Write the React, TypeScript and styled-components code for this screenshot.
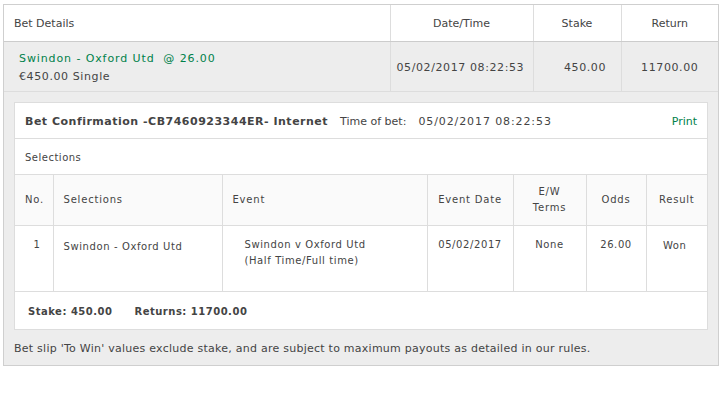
import styled, { createGlobalStyle } from "styled-components";

const GlobalStyle = createGlobalStyle`
    *, *::before, *::after {
        box-sizing: border-box;
    }
    body {
        margin: 0;
        background: #ffffff;
        font-family: "DejaVu Sans", Verdana, sans-serif;
        font-size: 11px;
        color: #444444;
    }
`;

const Panel = styled.div`
    margin: 4px 0 0 3px;
    width: 716px;
    border: 1px solid #cfcfcf;
    background: #ededed;
`;

const SummaryTable = styled.table`
    width: 100%;
    border-collapse: collapse;
    table-layout: fixed;
`;

const SummaryHead = styled.th<{ $width?: number; $align?: string }>`
    width: ${(p) => (p.$width ? `${p.$width}px` : "auto")};
    height: 36px;
    padding: 2px 10px 0;
    background: #ffffff;
    border-bottom: 1px solid #cccccc;
    border-left: 1px solid #dddddd;
    text-align: ${(p) => p.$align || "center"};
    font-weight: normal;
    color: #444444;
    &:first-child {
        border-left: none;
    }
`;

const SummaryCell = styled.td<{ $align?: string; $pad?: string }>`
    height: 50px;
    padding: ${(p) => p.$pad || "2px 4px 0"};
    border-bottom: 1px solid #dddddd;
    border-left: 1px solid #dddddd;
    text-align: ${(p) => p.$align || "center"};
    white-space: nowrap;
    letter-spacing: 0.6px;
    color: #444444;
    &:first-child {
        border-left: none;
    }
`;

const BetName = styled.div`
    color: #00814a;
    letter-spacing: 0.9px;
    margin-bottom: 5px;
`;

const BetType = styled.div`
    letter-spacing: 0.6px;
`;

const Body = styled.div`
    padding: 10px 10px 0 10px;
`;

const Card = styled.div`
    border: 1px solid #dddddd;
    background: #ffffff;
`;

const CardRow = styled.div<{ $height: number }>`
    display: flex;
    align-items: center;
    height: ${(p) => p.$height}px;
    padding: 2px 10px 0;
    border-bottom: 1px solid #dddddd;
`;

const Title = styled.span`
    font-weight: bold;
    color: #444444;
    letter-spacing: 0.5px;
`;

const TimeLabel = styled.span`
    margin-left: 12px;
`;

const TimeValue = styled.span`
    margin-left: 12px;
    letter-spacing: 0.9px;
`;

const PrintLink = styled.a`
    margin-left: auto;
    color: #00814a;
    text-decoration: none;
    cursor: pointer;
`;

const Plain = styled.span`
    letter-spacing: 0.5px;
    font-size: 10px;
`;

const Grid = styled.table`
    width: 100%;
    border-collapse: collapse;
    table-layout: fixed;
    border-bottom: 1px solid #dddddd;
`;

const GridHead = styled.th<{ $width?: number; $align?: string }>`
    width: ${(p) => (p.$width ? `${p.$width}px` : "auto")};
    height: 51px;
    padding: 0 10px;
    background: #fafafa;
    border-left: 1px solid #dddddd;
    border-bottom: 1px solid #dddddd;
    text-align: ${(p) => p.$align || "center"};
    font-weight: normal;
    font-size: 10px;
    letter-spacing: 0.8px;
    line-height: 16px;
    color: #444444;
    &:first-child {
        border-left: none;
    }
`;

const GridCell = styled.td<{ $align?: string; $pad?: string }>`
    height: 66px;
    padding: ${(p) => p.$pad || "11px 10px 0"};
    vertical-align: top;
    border-left: 1px solid #dddddd;
    text-align: ${(p) => p.$align || "center"};
    letter-spacing: 0.6px;
    line-height: 16px;
    font-size: 10px;
    color: #444444;
    &:first-child {
        border-left: none;
    }
`;

const Totals = styled.div`
    display: flex;
    align-items: center;
    gap: 22px;
    height: 37px;
    padding: 2px 13px 0;
    font-weight: bold;
    letter-spacing: 0.5px;
    font-size: 10px;
`;

const Disclaimer = styled.div`
    height: 35px;
    display: flex;
    align-items: center;
    padding: 2px 0 0;
    letter-spacing: 0.25px;
`;

export default function App() {
    return (
        <>
            <GlobalStyle />
            <Panel>
                <SummaryTable>
                    <thead>
                        <tr>
                            <SummaryHead $align="left">Bet Details</SummaryHead>
                            <SummaryHead $width={143}>Date/Time</SummaryHead>
                            <SummaryHead $width={88}>Stake</SummaryHead>
                            <SummaryHead $width={97}>Return</SummaryHead>
                        </tr>
                    </thead>
                    <tbody>
                        <tr>
                            <SummaryCell $align="left" $pad="2px 15px 0">
                                <BetName>Swindon - Oxford Utd&nbsp; @ 26.00</BetName>
                                <BetType>€450.00 Single</BetType>
                            </SummaryCell>
                            <SummaryCell $align="left" $pad="2px 6px 0">05/02/2017 08:22:53</SummaryCell>
                            <SummaryCell $pad="2px 0 0 16px">450.00</SummaryCell>
                            <SummaryCell>11700.00</SummaryCell>
                        </tr>
                    </tbody>
                </SummaryTable>
                <Body>
                    <Card>
                        <CardRow $height={36}>
                            <Title>Bet Confirmation -CB7460923344ER- Internet</Title>
                            <TimeLabel>Time of bet:</TimeLabel>
                            <TimeValue>05/02/2017 08:22:53</TimeValue>
                            <PrintLink>Print</PrintLink>
                        </CardRow>
                        <CardRow $height={36}>
                            <Plain>Selections</Plain>
                        </CardRow>
                        <Grid>
                            <thead>
                                <tr>
                                    <GridHead $width={38}>No.</GridHead>
                                    <GridHead $width={169} $align="left">Selections</GridHead>
                                    <GridHead $align="left">Event</GridHead>
                                    <GridHead $width={86}>Event Date</GridHead>
                                    <GridHead $width={73}>E/W<br />Terms</GridHead>
                                    <GridHead $width={60}>Odds</GridHead>
                                    <GridHead $width={61}>Result</GridHead>
                                </tr>
                            </thead>
                            <tbody>
                                <tr>
                                    <GridCell $align="right" $pad="11px 12px 0">1</GridCell>
                                    <GridCell $align="left" $pad="13px 10px 0">Swindon - Oxford Utd</GridCell>
                                    <GridCell $align="left" $pad="11px 22px 0">
                                        Swindon v Oxford Utd
                                        <br />
                                        (Half Time/Full time)
                                    </GridCell>
                                    <GridCell>05/02/2017</GridCell>
                                    <GridCell>None</GridCell>
                                    <GridCell>26.00</GridCell>
                                    <GridCell $pad="12px 10px 0 6px">Won</GridCell>
                                </tr>
                            </tbody>
                        </Grid>
                        <Totals>
                            <span>Stake: 450.00</span>
                            <span>Returns: 11700.00</span>
                        </Totals>
                    </Card>
                    <Disclaimer>
                        Bet slip 'To Win' values exclude stake, and are subject to maximum payouts as detailed in our rules.
                    </Disclaimer>
                </Body>
            </Panel>
        </>
    );
}
